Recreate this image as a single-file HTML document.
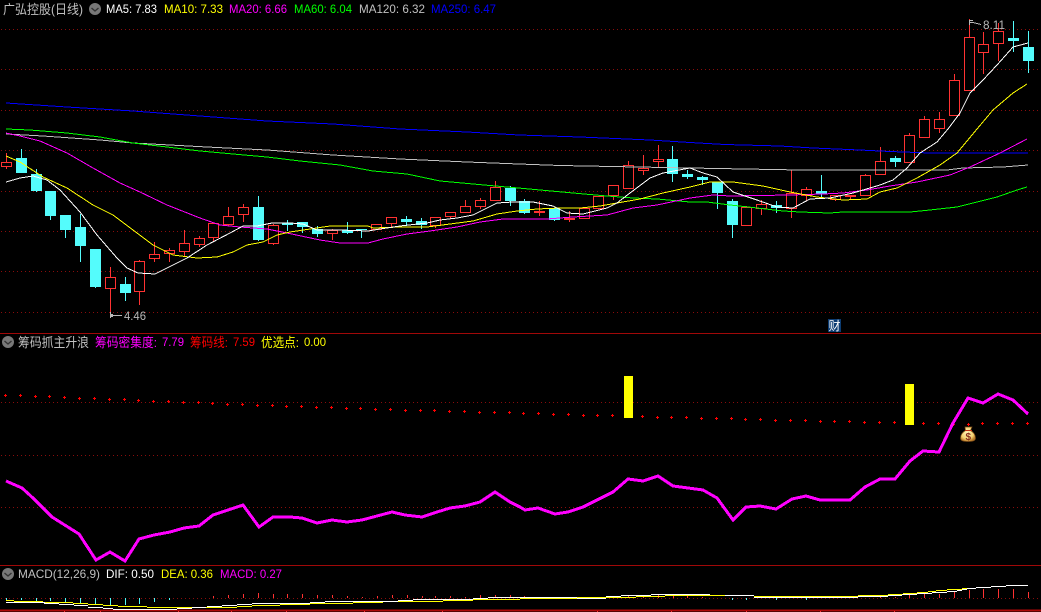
<!DOCTYPE html>
<html><head><meta charset="utf-8"><style>
html,body{margin:0;padding:0;background:#000;width:1041px;height:612px;overflow:hidden}
svg{display:block}
text{font-family:"Liberation Sans","WenQuanYi Zen Hei","Noto Sans CJK SC",sans-serif;font-size:12px;dominant-baseline:auto}
.z{font-size:13px}
</style></head><body>
<svg width="1041" height="612" viewBox="0 0 1041 612" xmlns="http://www.w3.org/2000/svg" shape-rendering="crispEdges">
<g stroke="#8a0c0c" stroke-width="1" stroke-dasharray="1 3" fill="none">
<path d="M1 29.5H1041M1 69.5H1041M1 110.5H1041M1 150.5H1041M1 191.5H1041M1 231.5H1041M1 271.5H1041M1 312.5H1041M1 402.5H1041M1 455.5H1041M1 507.5H1041M1 598.5H1041"/>
</g>
<path d="M0 333.5H1041M0 565.5H1041" stroke="#a00808" fill="none"/>
<path d="M0 610.5H1041" stroke="#b00808" stroke-width="2" fill="none"/>
<path d="M64.5 611v1M100.5 611v1M178.5 611v1M231.5 611v1M286.5 611v1M364.5 611v1M442.5 611v1M597.5 611v1M671.5 611v1M746.5 611v1M820.5 611v1M894.5 611v1" stroke="#ff3232" fill="none"/>

<!-- cyan candles -->
<path stroke="#54fcfc" fill="none" d="M21.5 149V158M36.5 169V174M36.5 191V192M50.5 216V220M65.5 230V238M80.5 214V227M80.5 246V262M95.5 287V288M125.5 277V284M125.5 293V301M258.5 196V207M258.5 240V241M287.5 220V223M287.5 224V231M302.5 227V233M317.5 226V229M317.5 234V237M347.5 222V230M347.5 233V234M361.5 230V238M406.5 216V219M406.5 222V226M421.5 218V221M421.5 225V229M510.5 186V188M510.5 201V206M524.5 199V201M524.5 213V214M554.5 220V221M672.5 146V159M672.5 174V182M687.5 170V174M687.5 177V179M702.5 176V177M702.5 180V185M717.5 193V209M732.5 199V201M732.5 225V238M776.5 201V205M776.5 208V213M821.5 175V191M821.5 194V198M895.5 156V158M895.5 162V167M1013.5 21V38M1013.5 41V52M1028.5 31V47M1028.5 61V73"/>
<path fill="#54fcfc" d="M16 158h11v15h-11zM31 174h11v17h-11zM45 191h11v25h-11zM60 215h11v15h-11zM75 227h11v19h-11zM90 249h11v38h-11zM120 284h11v9h-11zM253 207h11v33h-11zM282 223h11v2h-11zM297 222h11v5h-11zM312 229h11v5h-11zM342 230h11v3h-11zM356 229h11v1h-11zM401 219h11v3h-11zM416 221h11v4h-11zM505 188h11v13h-11zM519 201h11v12h-11zM549 208h11v12h-11zM667 159h11v15h-11zM682 174h11v3h-11zM697 177h11v3h-11zM712 182h11v11h-11zM727 201h11v24h-11zM771 205h11v3h-11zM816 191h11v3h-11zM890 158h11v4h-11zM1008 38h11v3h-11zM1023 47h11v14h-11z"/>

<!-- red candles -->
<path stroke="#ff3232" fill="none" d="M6.5 153V162M6.5 167V169M110.5 267V277M110.5 289V313M139.5 260V261M139.5 292V305M154.5 242V254M154.5 259V262M169.5 248V250M169.5 254V262M184.5 230V243M184.5 252V256M199.5 236V238M199.5 245V247M213.5 238V241M228.5 207V216M228.5 225V226M243.5 204V207M243.5 215V222M273.5 224V225M273.5 244V245M332.5 229V230M332.5 234V240M391.5 224V227M435.5 226V228M450.5 217V219M465.5 200V206M480.5 198V200M480.5 207V209M495.5 181V187M539.5 201V211M539.5 213V216M569.5 211V218M569.5 220V222M613.5 196V200M628.5 161V165M643.5 155V168M643.5 171V175M658.5 145V159M658.5 162V167M746.5 206V207M761.5 200V204M761.5 209V215M791.5 170V193M791.5 209V218M806.5 187V189M806.5 196V201M835.5 200V201M850.5 197V200M865.5 174V175M880.5 147V161M909.5 133V135M924.5 116V119M939.5 112V119M939.5 129V133M954.5 74V80M969.5 19V37M983.5 32V44M983.5 53V74M998.5 23V31M998.5 44V61"/>
<path stroke="#ff3232" fill="#000" d="M1.5 162.5h10v4h-10zM105.5 277.5h10v11h-10zM134.5 261.5h10v30h-10zM149.5 254.5h10v4h-10zM164.5 250.5h10v3h-10zM179.5 243.5h10v8h-10zM194.5 238.5h10v6h-10zM208.5 223.5h10v14h-10zM223.5 216.5h10v8h-10zM238.5 207.5h10v7h-10zM268.5 225.5h10v18h-10zM327.5 230.5h10v3h-10zM371.5 224.5h10v5h-10zM386.5 217.5h10v6h-10zM430.5 217.5h10v8h-10zM445.5 212.5h10v4h-10zM460.5 206.5h10v6h-10zM475.5 200.5h10v6h-10zM490.5 187.5h10v13h-10zM564.5 218.5h10v1h-10zM579.5 208.5h10v10h-10zM593.5 196.5h10v12h-10zM608.5 185.5h10v10h-10zM623.5 165.5h10v23h-10zM638.5 168.5h10v2h-10zM653.5 159.5h10v2h-10zM741.5 207.5h10v18h-10zM756.5 204.5h10v4h-10zM786.5 193.5h10v15h-10zM801.5 189.5h10v6h-10zM830.5 195.5h10v4h-10zM860.5 175.5h10v20h-10zM875.5 161.5h10v13h-10zM904.5 135.5h10v27h-10zM919.5 119.5h10v18h-10zM934.5 119.5h10v9h-10zM949.5 80.5h10v35h-10zM964.5 37.5h10v53h-10zM978.5 44.5h10v8h-10zM993.5 31.5h10v12h-10z"/>
<path fill="#ff3232" d="M534 211h11v2h-11zM845 195h11v2h-11z"/>

<!-- moving averages -->
<g fill="none" stroke-width="1">
<polyline stroke="#0000ff" points="6,103 67,107 133,111 200,116 267,121 333,124 400,129 467,132 519,135 580,137 650,140 690,142.5 725,144.5 780,146 813,148 860,150 890,151.5 930,153 1028,153"/>
<polyline stroke="#c0c0c0" points="6,134 43,136 100,140 133,143 207,147 267,150 333,155 400,159 467,162 519,164 560,165.5 690,168 800,170 947,170 963,168 1003,167 1028,165"/>
<polyline stroke="#00ff00" points="6,129 30,130 67,133 100,137 133,143 167,147 200,151 233,154 267,157 300,161 340,165 373,171 407,174 440,181 473,184 507,187 540,190 573,193 607,196 633,198 657,199 690,202 707,202 730,205 757,208 783,211 800,212 830,213 843,212 910,212 930,210 957,207 977,202 997,197 1017,190 1027,187"/>
<polyline stroke="#ff00ff" points="6,133 20,136 40,141 67,153 93,168 120,183 140,192 167,205 200,218 220,225 240,227 267,229 287,233 320,240 340,243 368,243 383,239 407,234 430,231 457,227 480,222 503,219 547,219 573,217 607,215 633,208 657,205 690,198 713,195 730,196 790,195 823,194 843,193 867,190 890,186 917,182 950,175 970,167 1000,153 1027,139"/>
<polyline stroke="#ffff00" points="6,156 20,162 43,177 67,188 93,205 113,215 133,230 153,245 173,255 197,258 217,257 233,252 247,245 263,242 277,235 290,232 310,229 330,226 368,226 373,228 400,227 427,227 450,224 473,221 497,214 517,211 537,209 560,208 580,208 600,206 617,203 640,199 663,193 690,187 710,182 733,182 763,186 790,192 817,197 843,200 867,199 880,192 897,188 917,178 940,165 957,153 977,129 993,110 1013,93 1027,84"/>
<polyline stroke="#ffffff" points="6,182 20,178 33,176 47,180 60,190 80,212 97,235 117,258 127,268 138,273 155,274 167,268 187,258 207,245 230,233 243,226 257,226 272,223 290,223 303,224 317,230 340,230 368,231 380,229 400,226 427,223 440,220 457,218 473,215 497,203 513,202 533,202 553,206 567,213 583,214 607,208 617,203 630,193 650,178 663,173 690,168 703,173 717,177 733,192 757,200 777,207 793,208 810,199 830,198 853,193 880,185 893,180 907,168 920,153 937,142 948,129 960,113 970,93 983,80 997,65 1013,47 1028,43"/>
</g>

<!-- extrema labels -->
<path stroke="#b8b8b8" fill="none" d="M110.5 312V318M110 315.5H122M111 314.5h2M111 316.5h2M969.5 20V25M970 20.5h3M970 22.5h3M973 22.5l8 2"/>
<text x="124" y="320" fill="#b8b8b8" textLength="22" lengthAdjust="spacingAndGlyphs">4.46</text>
<text x="983" y="29" fill="#b8b8b8" textLength="22" lengthAdjust="spacingAndGlyphs">8.11</text>

<!-- title row -->
<text x="3" y="14" fill="#c0c0c0" class="z" textLength="80" lengthAdjust="spacingAndGlyphs">广弘控股(日线)</text>
<circle cx="95" cy="9" r="6" fill="#787878" shape-rendering="auto"/>
<path d="M91.5 8l3.5 3 3.5-3" stroke="#333" stroke-width="1.4" fill="none" shape-rendering="auto"/>
<text x="106" y="13" fill="#fff" textLength="51" lengthAdjust="spacingAndGlyphs">MA5: 7.83</text>
<text x="164" y="13" fill="#ff0" textLength="59" lengthAdjust="spacingAndGlyphs">MA10: 7.33</text>
<text x="229" y="13" fill="#f0f" textLength="58" lengthAdjust="spacingAndGlyphs">MA20: 6.66</text>
<text x="294" y="13" fill="#0f0" textLength="58" lengthAdjust="spacingAndGlyphs">MA60: 6.04</text>
<text x="359" y="13" fill="#c0c0c0" textLength="66" lengthAdjust="spacingAndGlyphs">MA120: 6.32</text>
<text x="431" y="13" fill="#0000ff" textLength="65" lengthAdjust="spacingAndGlyphs">MA250: 6.47</text>

<!-- 财 badge -->
<rect x="828" y="319" width="13" height="13" fill="#0c3c72"/>
<text x="828.5" y="330" fill="#fff" style="font-size:12px">财</text>

<!-- pane 2 header -->
<circle cx="8" cy="342" r="6" fill="#787878" shape-rendering="auto"/>
<path d="M4.5 341l3.5 3 3.5-3" stroke="#333" stroke-width="1.4" fill="none" shape-rendering="auto"/>
<text x="18" y="347" fill="#c0c0c0" class="z" textLength="71" lengthAdjust="spacingAndGlyphs">筹码抓主升浪</text>
<text x="95" y="347" fill="#f0f" class="z" textLength="62" lengthAdjust="spacingAndGlyphs">筹码密集度:</text>
<text x="162" y="346" fill="#f0f" textLength="22" lengthAdjust="spacingAndGlyphs">7.79</text>
<text x="190" y="347" fill="#f00" class="z" textLength="38" lengthAdjust="spacingAndGlyphs">筹码线:</text>
<text x="233" y="346" fill="#f00" textLength="22" lengthAdjust="spacingAndGlyphs">7.59</text>
<text x="261" y="347" fill="#ff0" class="z" textLength="38" lengthAdjust="spacingAndGlyphs">优选点:</text>
<text x="304" y="346" fill="#ff0" textLength="22" lengthAdjust="spacingAndGlyphs">0.00</text>

<!-- crosses -->
<path stroke="#ff0000" fill="none" d="M4 395.5h3M5.5 394v3M19 395.5h3M20.5 394v3M34 396.5h3M35.5 395v3M48 396.5h3M49.5 395v3M63 397.5h3M64.5 396v3M78 398.5h3M79.5 397v3M93 398.5h3M94.5 397v3M108 399.5h3M109.5 398v3M123 399.5h3M124.5 398v3M137 400.5h3M138.5 399v3M152 401.5h3M153.5 400v3M167 401.5h3M168.5 400v3M182 402.5h3M183.5 401v3M197 402.5h3M198.5 401v3M211 403.5h3M212.5 402v3M226 404.5h3M227.5 403v3M241 404.5h3M242.5 403v3M256 405.5h3M257.5 404v3M271 405.5h3M272.5 404v3M285 406.5h3M286.5 405v3M300 406.5h3M301.5 405v3M315 407.5h3M316.5 406v3M330 407.5h3M331.5 406v3M345 408.5h3M346.5 407v3M359 408.5h3M360.5 407v3M374 409.5h3M375.5 408v3M389 409.5h3M390.5 408v3M404 410.5h3M405.5 409v3M419 410.5h3M420.5 409v3M433 410.5h3M434.5 409v3M448 411.5h3M449.5 410v3M463 411.5h3M464.5 410v3M478 412.5h3M479.5 411v3M493 412.5h3M494.5 411v3M508 412.5h3M509.5 411v3M522 413.5h3M523.5 412v3M537 413.5h3M538.5 412v3M552 414.5h3M553.5 413v3M567 414.5h3M568.5 413v3M582 415.5h3M583.5 414v3M596 415.5h3M597.5 414v3M611 415.5h3M612.5 414v3M641 416.5h3M642.5 415v3M656 417.5h3M657.5 416v3M670 417.5h3M671.5 416v3M685 417.5h3M686.5 416v3M700 418.5h3M701.5 417v3M715 418.5h3M716.5 417v3M730 418.5h3M731.5 417v3M744 419.5h3M745.5 418v3M759 419.5h3M760.5 418v3M774 420.5h3M775.5 419v3M789 420.5h3M790.5 419v3M804 420.5h3M805.5 419v3M819 421.5h3M820.5 420v3M833 421.5h3M834.5 420v3M848 421.5h3M849.5 420v3M863 422.5h3M864.5 421v3M878 422.5h3M879.5 421v3M893 422.5h3M894.5 421v3M922 423.5h3M923.5 422v3M937 423.5h3M938.5 422v3M952 424.5h3M953.5 423v3M967 424.5h3M968.5 423v3M981 423.5h3M982.5 422v3M996 423.5h3M997.5 422v3M1011 423.5h3M1012.5 422v3M1026 423.5h3M1027.5 422v3"/>

<!-- yellow bars -->
<rect x="624" y="376" width="9" height="42" fill="#ffff00"/>
<rect x="905" y="384" width="9" height="41" fill="#ffff00"/>

<!-- magenta line -->
<polyline fill="none" stroke="#ff00ff" stroke-width="3" points="6,481 22,488 33,498 52,517 79,534 96,560 110,552 125,561 139,539 154,535 170,532 184,528 199,526 213,515 228,510 243,505 259,527 273,517 290,517 302,518 317,523 332,520 347,522 362,520 377,516 392,512 405,515 422,517 437,512 450,508 465,506 480,502 495,492 510,502 520,507 525,510 538,508 555,514 568,512 583,507 613,492 628,479 643,481 658,476 673,486 688,488 703,490 717,498 733,520 746,507 760,506 776,509 792,499 806,496 820,500 850,500 865,487 880,479 895,479 910,461 923,451 939,452 953,423 968,398 983,403 998,394 1013,400 1028,414"/>

<!-- money bag -->
<g shape-rendering="auto">
<defs><radialGradient id="b" cx="45%" cy="40%" r="60%"><stop offset="0" stop-color="#fff6b8"/><stop offset=".7" stop-color="#f4d070"/><stop offset="1" stop-color="#b87a28"/></radialGradient></defs>
<path d="M965 427h7l-1.5 3.5c3 1.5 5 4.5 5 7.5 0 2.5-2 3.5-7.5 3.5s-7.5-1-7.5-3.5c0-3 2-6 5-7.5z" fill="url(#b)" stroke="#7a4a18" stroke-width=".7"/>
<path d="M965 430.5h7" stroke="#c03010" stroke-width="1"/>
<text x="965.5" y="440" fill="#8a3020" style="font-size:10px;font-weight:bold">$</text>
</g>

<!-- pane 3 header -->
<circle cx="8" cy="574" r="6" fill="#787878" shape-rendering="auto"/>
<path d="M4.5 573l3.5 3 3.5-3" stroke="#333" stroke-width="1.4" fill="none" shape-rendering="auto"/>
<text x="18" y="578" fill="#c0c0c0" textLength="82" lengthAdjust="spacingAndGlyphs">MACD(12,26,9)</text>
<text x="106" y="578" fill="#fff" textLength="48" lengthAdjust="spacingAndGlyphs">DIF: 0.50</text>
<text x="161" y="578" fill="#ff0" textLength="52" lengthAdjust="spacingAndGlyphs">DEA: 0.36</text>
<text x="220" y="578" fill="#f0f" textLength="62" lengthAdjust="spacingAndGlyphs">MACD: 0.27</text>

<!-- MACD -->
<path stroke="#ff3232" fill="none" d="M213.5 596V598M228.5 595V598M243.5 594V598M258.5 593V598M273.5 594V598M287.5 594V598M302.5 594V598M317.5 595V598M332.5 595V598M347.5 596V598M362.5 597V598M377.5 596V598M392.5 595V598M407.5 595V598M422.5 596V598M435.5 596V598M450.5 596V598M465.5 597V598M480.5 595V598M495.5 595V598M510.5 595V598M524.5 596V598M554.5 597V598M584.5 598V599M598.5 597V598M613.5 597V598M628.5 595V598M643.5 595V598M658.5 595V598M673.5 595V598M687.5 595V598M702.5 597V598M880.5 597V598M895.5 597V598M909.5 595V598M924.5 593V598M939.5 594V598M954.5 592V598M969.5 590V598M983.5 589V598M998.5 589V598M1013.5 589V598M1028.5 592V598"/>
<path stroke="#54fcfc" fill="none" d="M6.5 598V601M21.5 598V600M36.5 598V601M50.5 598V601M65.5 598V602M80.5 598V603M95.5 598V604M110.5 598V605M125.5 598V605M139.5 598V604M154.5 598V602M169.5 598V600M732.5 598V600M746.5 598V600M776.5 598V600M806.5 598V600"/>
<path stroke="#ffff00" fill="none" d="M6 600.5h8M14 601.5h29M43 602.5h30M73 603.5h15M88 604.5h15M103 605.5h15M118 606.5h29M147 607.5h60M207 607.5h30M237 606.5h15M252 605.5h28M280 604.5h30M310 603.5h15M325 603.5h28M353 602.5h30M383 601.5h15M398 601.5h15M413 601.5h30M443 600.5h30M473 599.5h30M503 599.5h17M520 598.5h57M577 597.5h59M636 596.5h29M665 595.5h60M725 595.5h29M754 596.5h104M858 595.5h30M888 594.5h15M903 593.5h14M917 592.5h11M928 591.5h8M936 590.5h11M947 589.5h15M962 588.5h8"/>
<path stroke="#fff" fill="none" d="M6 602.5h24M30 602.5h15M44 603.5h15M59 604.5h15M74 605.5h14M88 607.5h15M103 608.5h10M113 609.5h20M132 609.5h45M177 608.5h15M192 607.5h14M207 606.5h15M222 605.5h15M237 604.5h15M252 603.5h58M310 602.5h15M325 601.5h58M383 601.5h15M398 600.5h15M413 599.5h45M458 599.5h15M473 598.5h15M488 597.5h89M577 598.5h29M606 596.5h15M621 595.5h30M651 594.5h59M710 595.5h0M725 595.5h29M754 597.5h104M858 596.5h30M888 595.5h14M902 594.5h15M917 593.5h15M932 592.5h15M947 591.5h10M957 590.5h5M962 589.5h5M967 588.5h9M976 587.5h15M991 586.5h15M1006 585.5h22"/>
</svg>
</body></html>
